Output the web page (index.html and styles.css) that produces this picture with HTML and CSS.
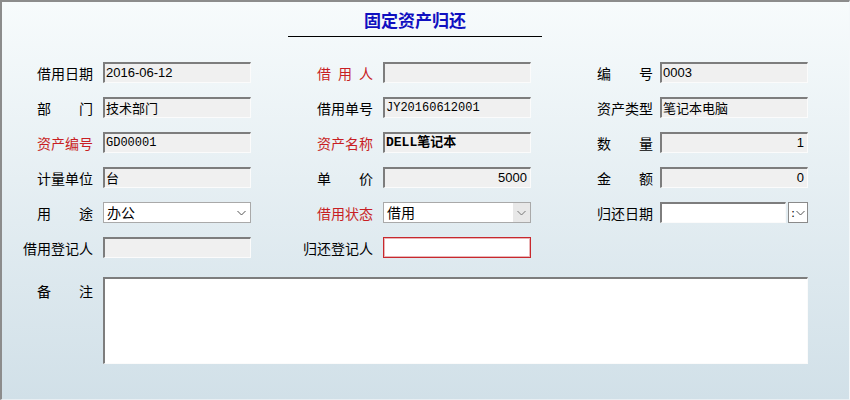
FILE: index.html
```html
<!DOCTYPE html>
<html lang="zh-CN">
<head>
  <meta charset="UTF-8">
  <title>固定资产归还</title>
  <link rel="stylesheet" href="styles.css">
</head>
<body>
  <div class="window">
    <h1 class="title">固定资产归还</h1>
    <div class="form">
      <div class="field"><label>借用日期</label><div class="box sans">2016-06-12</div></div>
      <div class="field"><label class="req">借用人</label><div class="box"></div></div>
      <div class="field narrow"><label>编号</label><div class="box sans">0003</div></div>

      <div class="field"><label>部门</label><div class="box">技术部门</div></div>
      <div class="field"><label>借用单号</label><div class="box mono">JY20160612001</div></div>
      <div class="field narrow"><label>资产类型</label><div class="box">笔记本电脑</div></div>

      <div class="field"><label class="req">资产编号</label><div class="box mono">GD00001</div></div>
      <div class="field"><label class="req">资产名称</label><div class="box mono bold">DELL笔记本</div></div>
      <div class="field narrow"><label>数量</label><div class="box sans num">1</div></div>

      <div class="field"><label>计量单位</label><div class="box">台</div></div>
      <div class="field"><label>单价</label><div class="box sans num">5000</div></div>
      <div class="field narrow"><label>金额</label><div class="box sans num">0</div></div>

      <div class="field"><label>用途</label>
        <div class="combo"><span class="value">办公</span>
          <span class="btn"><svg width="9" height="6" viewBox="0 0 9 6"><polyline points="0.5,1 4.5,5 8.5,1" fill="none" stroke="#555" stroke-width="1"/></svg></span>
        </div>
      </div>
      <div class="field"><label class="req">借用状态</label>
        <div class="combo locked"><span class="value">借用</span>
          <span class="btn"><svg width="9" height="6" viewBox="0 0 9 6"><polyline points="0.5,1 4.5,5 8.5,1" fill="none" stroke="#777" stroke-width="1"/></svg></span>
        </div>
      </div>
      <div class="field narrow"><label>归还日期</label>
        <div class="date"><div class="box edit"></div>
          <span class="pick">:<svg width="9" height="6" viewBox="0 0 9 6"><polyline points="0.5,1 4.5,5 8.5,1" fill="none" stroke="#555" stroke-width="1"/></svg></span>
        </div>
      </div>

      <div class="field"><label class="long">借用登记人</label><div class="box"></div></div>
      <div class="field"><label class="long">归还登记人</label><div class="box focus"></div></div>
    </div>
    <div class="remark">
      <label>备注</label>
      <div class="box edit memo"></div>
    </div>
  </div>
</body>
</html>
```

FILE: styles.css
```css
body { margin: 0; font-family: "Noto Sans CJK SC", sans-serif; color: #000; }
.window { width: 850px; height: 400px; box-sizing: border-box; border-top: 2px solid #8c8c8c; border-left: 2px solid #8c8c8c; border-right: 1px solid #f4f8fa; border-bottom: 1px solid #e8eef2; background: linear-gradient(#f7fbfc, #d1e0e8); }
.title { width: 254px; margin: 8px 0 0 286px; padding-bottom: 6px; border-bottom: 1px solid #000; font-size: 17px; line-height: 20px; font-weight: bold; color: #1010c0; text-align: center; }
.form { display: grid; grid-template-columns: 214px 214px 211px; column-gap: 66px; row-gap: 14px; margin: 25px 0 0 35px; }
.field { display: flex; align-items: center; gap: 10px; height: 21px; }
.field.narrow { gap: 7px; }
label { width: 56px; flex-shrink: 0; font-size: 14px; line-height: 18px; text-align: justify; text-align-last: justify; }
label.req { color: #c81e24; }
label.long { width: 70px; margin-left: -14px; }
.box { flex: 1; height: 21px; box-sizing: border-box; border-top: 2px solid #7d7d7d; border-left: 2px solid #7d7d7d; border-right: 1px solid #fbfbfb; border-bottom: 1px solid #fbfbfb; background: #f0f0f0; font-size: 13px; line-height: 18px; padding: 0 3px 0 1px; white-space: nowrap; overflow: hidden; }
.sans { font-family: "Liberation Sans", sans-serif; }
.mono { font-family: "Liberation Mono", "Noto Sans CJK SC", monospace; font-size: 12px; }
.bold { font-weight: bold; font-size: 13px; }
.num { text-align: right; }
.edit { background: #fff; }
.focus { border: 1px solid #c8282d; box-shadow: inset 0 0 0 1px #e9b5b7; background: #fff; }
.combo { flex: 1; display: flex; height: 21px; box-sizing: border-box; border: 1px solid #a9a9a9; background: #fff; font-size: 14px; line-height: 19px; }
.combo .value { flex: 1; padding-left: 3px; }
.combo .btn { width: 17px; display: flex; align-items: center; justify-content: center; }
.combo.locked .btn { background: #e8e8e8; }
.date { flex: 1; display: flex; gap: 2px; height: 21px; }
.pick { width: 20px; box-sizing: border-box; border: 1px solid #8a8a8a; background: #fff; display: flex; align-items: center; justify-content: center; gap: 1px; font-size: 11px; line-height: 19px; }
.remark { display: flex; gap: 10px; margin: 19px 0 0 35px; }
.remark label { padding-top: 5px; }
.memo { flex: none; width: 705px; height: 87px; }
```
